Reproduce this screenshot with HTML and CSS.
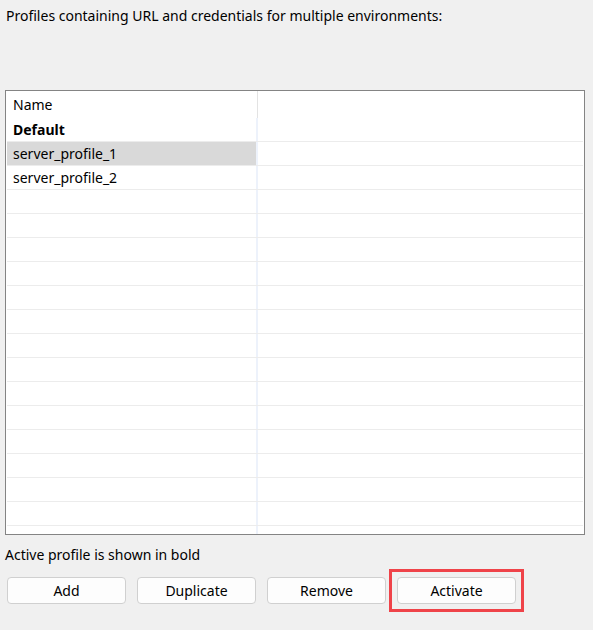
FILE: index.html
```html
<!DOCTYPE html>
<html lang="en">
<head>
    <meta charset="UTF-8">
    <meta name="viewport" content="width=device-width, initial-scale=1.0">
    <title>Server Profiles</title>
    <link rel="stylesheet" href="styles.css">
</head>
<body>
    <div class="panel">
        <div class="intro">Profiles containing URL and credentials for multiple environments:</div>

        <div class="profile-table">
            <div class="row head">
                <div class="cell name">Name</div>
                <div class="cell extra"></div>
            </div>
            <div class="row active">
                <div class="cell name">Default</div>
                <div class="cell extra"></div>
            </div>
            <div class="row selected">
                <div class="cell name">server_profile_1</div>
                <div class="cell extra"></div>
            </div>
            <div class="row">
                <div class="cell name">server_profile_2</div>
                <div class="cell extra"></div>
            </div>
            <div id="emptyRows"></div>
        </div>

        <div class="note">Active profile is shown in bold</div>

        <div class="buttons">
            <button class="btn">Add</button>
            <button class="btn">Duplicate</button>
            <button class="btn">Remove</button>
            <div class="marked"><button class="btn">Activate</button></div>
        </div>
    </div>

    <script>
        // pad the list with blank rows so the grid lines run to the bottom
        const emptyRows = document.getElementById("emptyRows");
        for (let i = 0; i < 16; i++) {
            emptyRows.innerHTML += `<div class="row"><div class="cell name"></div><div class="cell extra"></div></div>`;
        }
    </script>
</body>
</html>
```

FILE: styles.css
```css
body { margin: 0; background-color: #f0f0f0; font-family: "Noto Sans", sans-serif; font-size: 14px; color: #000; }
.panel { padding: 6px 8px 26px 5px; }
.intro { padding-left: 1px; height: 20px; line-height: 20px; margin-bottom: 64px; }
.profile-table { height: 443px; border: 1px solid #848484; background-color: #fff; padding: 0 1px; overflow: hidden; }
.row { display: flex; height: 23px; border-bottom: 1px solid #ececec; }
.row.head { height: 27px; border-bottom: none; }
.cell { line-height: 24px; }
.cell.name { width: 243px; padding-left: 6px; border-right: 2px solid #edf2fb; white-space: nowrap; }
.cell.extra { flex: 1; }
.row.head .cell { line-height: 28px; }
.row.head .cell.name { border-right: 1px solid #e3e3e3; width: 244px; }
.row.active .cell.name { font-weight: bold; }
.row.selected .cell.name { background-color: #d9d9d9; }
.note { height: 20px; line-height: 20px; margin-top: 10px; }
.buttons { display: flex; gap: 11px; margin-top: 12px; padding-left: 2px; }
.btn { width: 119px; height: 27px; background-color: #fdfdfd; border: 1px solid #d0d0d0; border-radius: 4px; font-family: "Noto Sans", sans-serif; font-size: 14px; color: #000; padding: 0; display: block; }
/* red frame drawn around the highlighted button */
.marked { position: relative; }
.marked::after { content: ""; position: absolute; top: -8px; bottom: -8px; left: -8px; right: -8px; border: 3px solid #ef4349; pointer-events: none; }
```
